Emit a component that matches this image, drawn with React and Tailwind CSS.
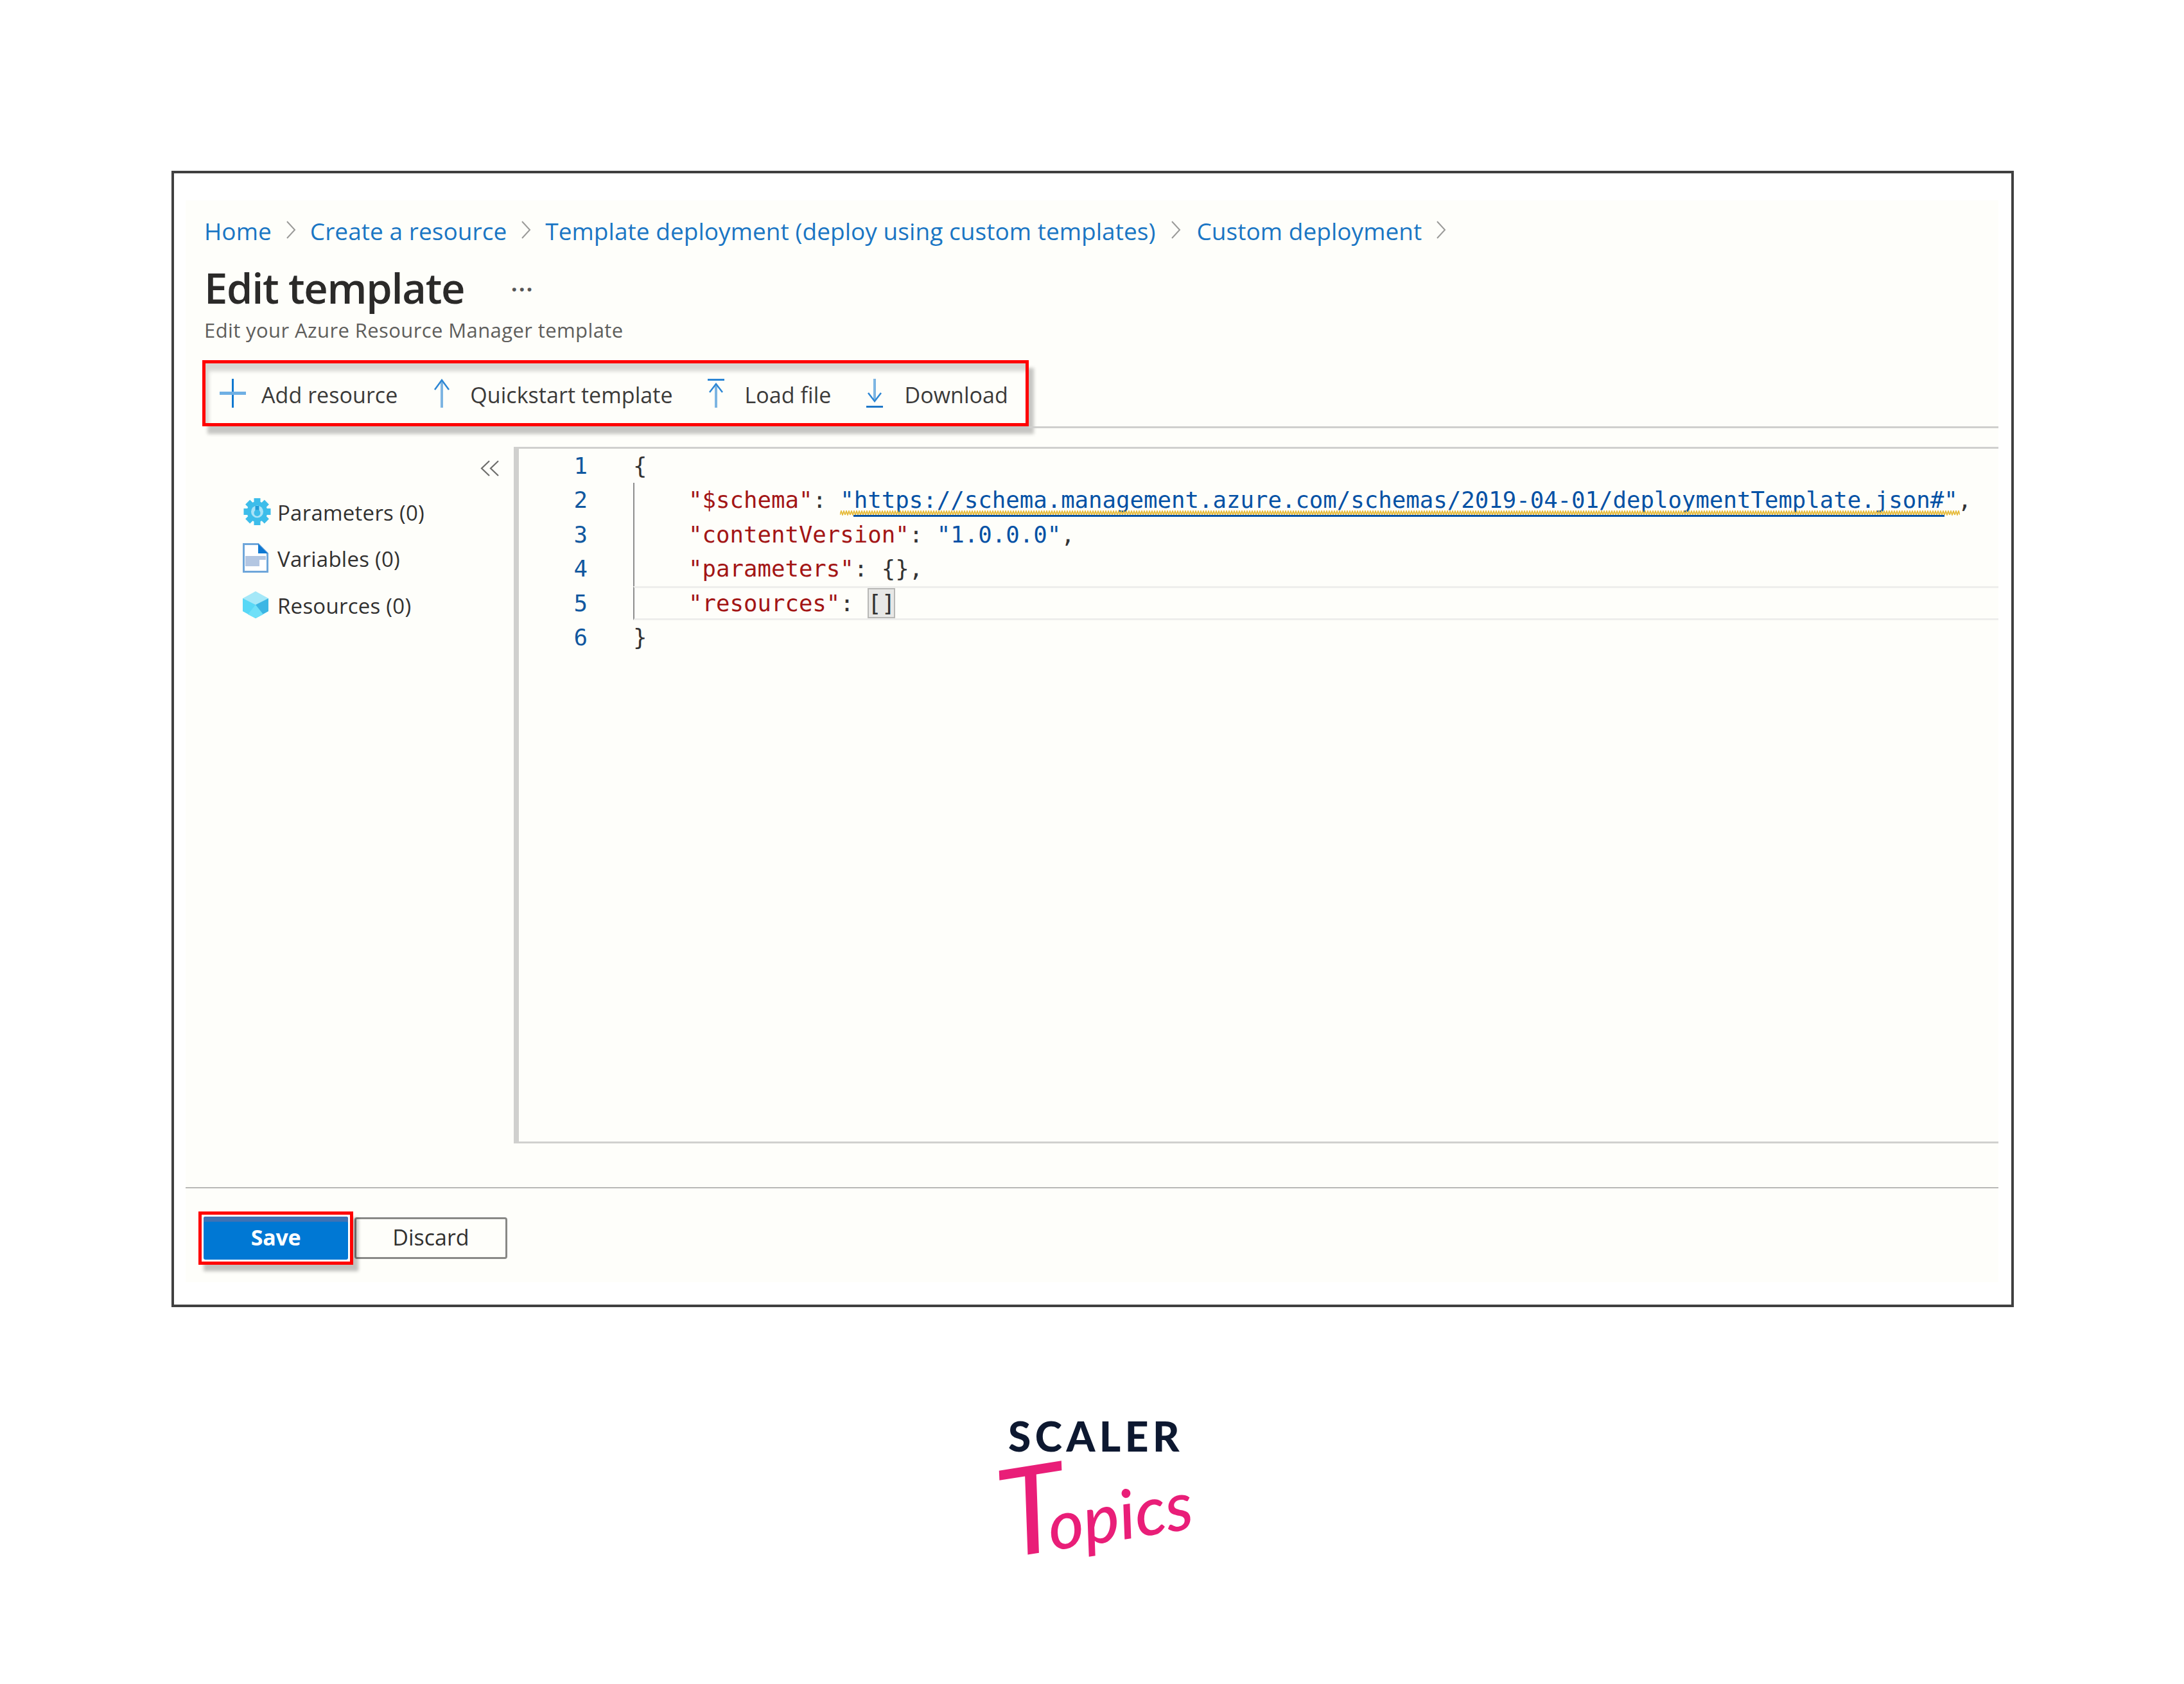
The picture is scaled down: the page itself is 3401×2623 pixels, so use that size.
const sans = { fontFamily: '"Open Sans", "Noto Sans", sans-serif' };

function Chevron() {
  return (
    <svg width="16" height="34" viewBox="0 0 16 34" className="shrink-0" fill="none" stroke="#9a9a98" strokeWidth="2">
      <path d="M2 2 L14 15 L2 28" />
    </svg>
  );
}

function PlusIcon() {
  return (
    <svg width="41" height="45" viewBox="0 0 41 45" className="shrink-0">
      <rect x="19" y="0" width="3" height="45" fill="#0f78d0" />
      <rect x="0" y="20" width="41" height="5" fill="#6fb0e4" />
    </svg>
  );
}

function UpIcon() {
  return (
    <svg width="30" height="45" viewBox="0 0 30 45" className="shrink-0" fill="none">
      <path d="M15 45 V3" stroke="#7db5e2" strokeWidth="4" />
      <path d="M4 17 L15 2 L26 17" stroke="#2c86d4" strokeWidth="2.5" />
    </svg>
  );
}

function LoadIcon() {
  return (
    <svg width="30" height="45" viewBox="0 0 30 45" className="shrink-0" fill="none">
      <rect x="2" y="0" width="26" height="3" fill="#2c86d4" />
      <path d="M15 45 V9" stroke="#7db5e2" strokeWidth="4" />
      <path d="M5 21 L15 8 L25 21" stroke="#2c86d4" strokeWidth="2.5" />
    </svg>
  );
}

function DownIcon() {
  return (
    <svg width="30" height="45" viewBox="0 0 30 45" className="shrink-0" fill="none">
      <path d="M15 0 V34" stroke="#7db5e2" strokeWidth="4" />
      <path d="M5 22 L15 35 L25 22" stroke="#2c86d4" strokeWidth="2.5" />
      <rect x="2" y="42" width="26" height="3" fill="#1f78c8" />
    </svg>
  );
}

function GearIcon() {
  return (
    <svg width="45" height="42" viewBox="0 0 45 42" className="shrink-0">
      <g fill="#3dbdea">
        {[0, 45, 90, 135].map((a) => (
          <rect key={a} x="17.5" y="0" width="10" height="42" transform={`rotate(${a} 22.5 21)`} />
        ))}
        <circle cx="22.5" cy="21" r="16" />
      </g>
      <circle cx="22.5" cy="21" r="9.5" fill="#a9e3f7" />
      <path d="M22.5 12 V22" stroke="#1f9bd8" strokeWidth="6" />
      <circle cx="22.5" cy="23" r="5" fill="#3dbdea" />
    </svg>
  );
}

function DocIcon() {
  return (
    <svg width="40" height="46" viewBox="0 0 40 46" className="shrink-0">
      <path d="M1.5 1.5 H24 L38.5 16 V44.5 H1.5 Z" fill="#fff" stroke="#6ea6da" strokeWidth="3" />
      <path d="M24 1 L39 16 H24 Z" fill="#0e78d2" />
      <rect x="4" y="20" width="32" height="6" fill="#b3c6e2" />
      <rect x="4" y="26" width="22" height="10" fill="#b3c6e2" />
    </svg>
  );
}

function CubeIcon() {
  return (
    <svg width="40" height="42" viewBox="0 0 40 42" className="shrink-0">
      <path d="M20 0 L40 11 V31 L20 42 L0 31 V11 Z" fill="#a5e8f8" />
      <path d="M0 11 L20 21 V42 L0 31 Z" fill="#58d8f6" />
      <path d="M40 11 L20 21 V42 L40 31 Z" fill="#3cb6e4" />
      <path d="M20 21 L8 36 L20 42 L32 36 Z" fill="#6fe0f8" />
    </svg>
  );
}

function Crumb({ children }) {
  return <span className="text-[#1a76c4] whitespace-nowrap">{children}</span>;
}

function ToolItem({ icon, label, iconGap, className }) {
  return (
    <div className={`flex items-center shrink-0 ${className}`} style={{ gap: iconGap }}>
      {icon}
      <span className="text-[#3b3a39] whitespace-nowrap pt-[6px]">{label}</span>
    </div>
  );
}

function SideItem({ icon, label, className }) {
  return (
    <div className={`flex items-center ${className}`}>
      <div className="w-[54px] shrink-0 flex">{icon}</div>
      <span className="text-[#323130] whitespace-nowrap pt-[3px]">{label}</span>
    </div>
  );
}

const R = "text-[#a31515]";
const B = "text-[#0451a5]";
const K = "text-[#333333]";

function CodeLine({ n, guide, active, children }) {
  return (
    <div className="flex h-[53.4px]">
      <div className="w-[107px] shrink-0 text-right text-[#11589f] leading-[53.4px]">{n}</div>
      <div className="w-[71px] shrink-0" />
      <div
        className={`flex-1 whitespace-pre ${guide ? "border-l-2 border-[#8d8d8d] pl-[84px]" : ""} ${
          active ? "border-y-[3px] border-y-[#eeeeec] leading-[47.4px]" : "leading-[53.4px]"
        }`}
      >
        {children}
      </div>
    </div>
  );
}

export default function App() {
  return (
    <div className="w-[3401px] h-[2623px] bg-white overflow-hidden pt-[266px] pl-[267px]" style={sans}>
      <div className="w-[2869px] h-[1770px] border-4 border-[#404040] bg-white pt-[42px] pl-[18px] pr-[20px]">
        <div className="bg-[#fefefa] h-[1685px] flex flex-col">
          <div className="h-[60px] mt-[18px] ml-[29px] flex items-center text-[37px] tracking-[0.05px]">
            <Crumb>Home</Crumb>
            <div className="mx-[22px]"><Chevron /></div>
            <Crumb>Create a resource</Crumb>
            <div className="mx-[22px]"><Chevron /></div>
            <Crumb>Template deployment (deploy using custom templates)</Crumb>
            <div className="mx-[24px]"><Chevron /></div>
            <Crumb>Custom deployment</Crumb>
            <div className="mx-[22px]"><Chevron /></div>
          </div>

          <div className="h-[78px] mt-[20px] ml-[29px] flex items-center">
            <h1 className="text-[65px] font-semibold text-[#2b2a29] whitespace-nowrap tracking-[-1.3px]">Edit template</h1>
            <span className="ml-[72px] text-[40px] leading-none text-[#555] font-semibold tracking-[1px] pt-[2px]">···</span>
          </div>

          <div className="h-[44px] mt-[4px] ml-[29px] flex items-center text-[31px] tracking-[0.4px] text-[#5f5e5c] whitespace-nowrap">
            Edit your Azure Resource Manager template
          </div>

          <div className="mt-[25px] ml-[26px] flex items-end">
            <div className="w-[1287px] h-[103px] shrink-0 border-[5px] border-[#ff0000] flex items-center pl-[22px] text-[34px] tracking-[0.05px] shadow-[8px_12px_5px_rgba(0,0,0,0.22),inset_5px_12px_6px_rgba(0,0,0,0.16)]">
              <ToolItem icon={<PlusIcon />} label="Add resource" iconGap="24px" />
              <ToolItem icon={<UpIcon />} label="Quickstart template" iconGap="29px" className="ml-[54px]" />
              <ToolItem icon={<LoadIcon />} label="Load file" iconGap="30px" className="ml-[52px]" />
              <ToolItem icon={<DownIcon />} label="Download" iconGap="31px" className="ml-[53px]" />
            </div>
            <div className="flex-1 h-[3px] bg-[#cfcfcd] -mb-[3px]" />
          </div>

          <div className="flex mt-[32px] h-[1085px] ml-0">
            <div className="w-[511px] shrink-0 relative text-[33px] tracking-[0.25px]">
              <div className="flex justify-end pr-[22px] pt-[21px]">
                <svg width="30" height="25" viewBox="0 0 30 25" fill="none" stroke="#6d6d6b" strokeWidth="2.2">
                  <path d="M14 1 L2 12.5 L14 24" />
                  <path d="M28 1 L16 12.5 L28 24" />
                </svg>
              </div>
              <div className="ml-[89px] mt-[34px] flex flex-col">
                <SideItem icon={<GearIcon />} label="Parameters (0)" className="h-[42px]" />
                <SideItem icon={<DocIcon />} label="Variables (0)" className="h-[46px] mt-[28px]" />
                <SideItem icon={<CubeIcon />} label="Resources (0)" className="h-[42px] mt-[29px]" />
              </div>
            </div>

            <div
              className="flex-1 border-l-[8px] border-y-[3px] border-[#d0d0ce] text-[35.7px] overflow-hidden"
              style={{ fontFamily: '"DejaVu Sans Mono", "Liberation Mono", monospace' }}
            >
              <CodeLine n="1"><span className={K}>{"{"}</span></CodeLine>
              <CodeLine n="2" guide>
                <span className={R}>"$schema"</span>
                <span className={K}>: </span>
                <span className={`${B} relative inline-block`}>
                  "https://schema.management.azure.com/schemas/2019-04-01/deploymentTemplate.json#"
                  <svg className="absolute left-0 top-[43px]" width="1744" height="8">
                    <defs>
                      <pattern id="squiggle" width="8" height="8" patternUnits="userSpaceOnUse">
                        <path d="M0 7 L2 1 L4 7 L6 1 L8 7" fill="none" stroke="#e6bb3c" strokeWidth="1.8" />
                      </pattern>
                    </defs>
                    <rect width="1744" height="8" fill="url(#squiggle)" />
                  </svg>
                  <span className="absolute left-[21px] right-[21px] top-[50px] h-[3px] bg-[#0451a5]" />
                </span>
                <span className={K}>,</span>
              </CodeLine>
              <CodeLine n="3" guide>
                <span className={R}>"contentVersion"</span>
                <span className={K}>: </span>
                <span className={B}>"1.0.0.0"</span>
                <span className={K}>,</span>
              </CodeLine>
              <CodeLine n="4" guide>
                <span className={R}>"parameters"</span>
                <span className={K}>: {"{}"},</span>
              </CodeLine>
              <CodeLine n="5" guide active>
                <span className={R}>"resources"</span>
                <span className={K}>: </span>
                <span className={`${K} inline-block bg-[#e8e8e6] shadow-[inset_0_0_0_2px_#b8b8b6]`}>[]</span>
              </CodeLine>
              <CodeLine n="6"><span className={K}>{"}"}</span></CodeLine>
            </div>
          </div>

          <div className="h-[2px] bg-[#b8b8b6] mt-[68px]" />

          <div className="mt-[36px] ml-[20px] flex items-center text-[34px]">
            <div className="w-[241px] h-[83px] shrink-0 border-[5px] border-[#ff0000] flex p-[3px] shadow-[8px_10px_5px_rgba(0,0,0,0.24)] relative z-10 bg-white">
              <button className="w-full h-full rounded-[3px] bg-[#0078d4] shadow-[inset_0_8px_0_#3f72b4] text-white font-bold tracking-[-0.3px] pb-[3px]">
                Save
              </button>
            </div>
            <button className="ml-[2px] w-[238px] h-[65px] rounded-[4px] border-[3px] border-[#888886] text-[#323130] font-medium tracking-[0px] pb-[3px]">
              Discard
            </button>
          </div>
        </div>
      </div>

      <div className="relative w-[300px] h-[240px] mt-[176px] ml-[1283px]">
        <div
          className="absolute left-[20px] top-[0px] h-[50px] text-[64px] leading-[50px] font-black text-[#0d1830] tracking-[6.5px] whitespace-nowrap"
          style={{ fontFamily: "Lato, sans-serif" }}
        >
          SCALER
        </div>
        <div
          className="absolute left-[4px] top-[56px] w-[330px] italic font-medium text-[#e91e78] text-[106px] leading-[120px] whitespace-nowrap -rotate-[9deg] first-letter:text-[190px] first-letter:font-normal first-letter:mr-[-30px]"
          style={{ fontFamily: "Lato, sans-serif" }}
        >
          Topics
        </div>
      </div>
    </div>
  );
}
